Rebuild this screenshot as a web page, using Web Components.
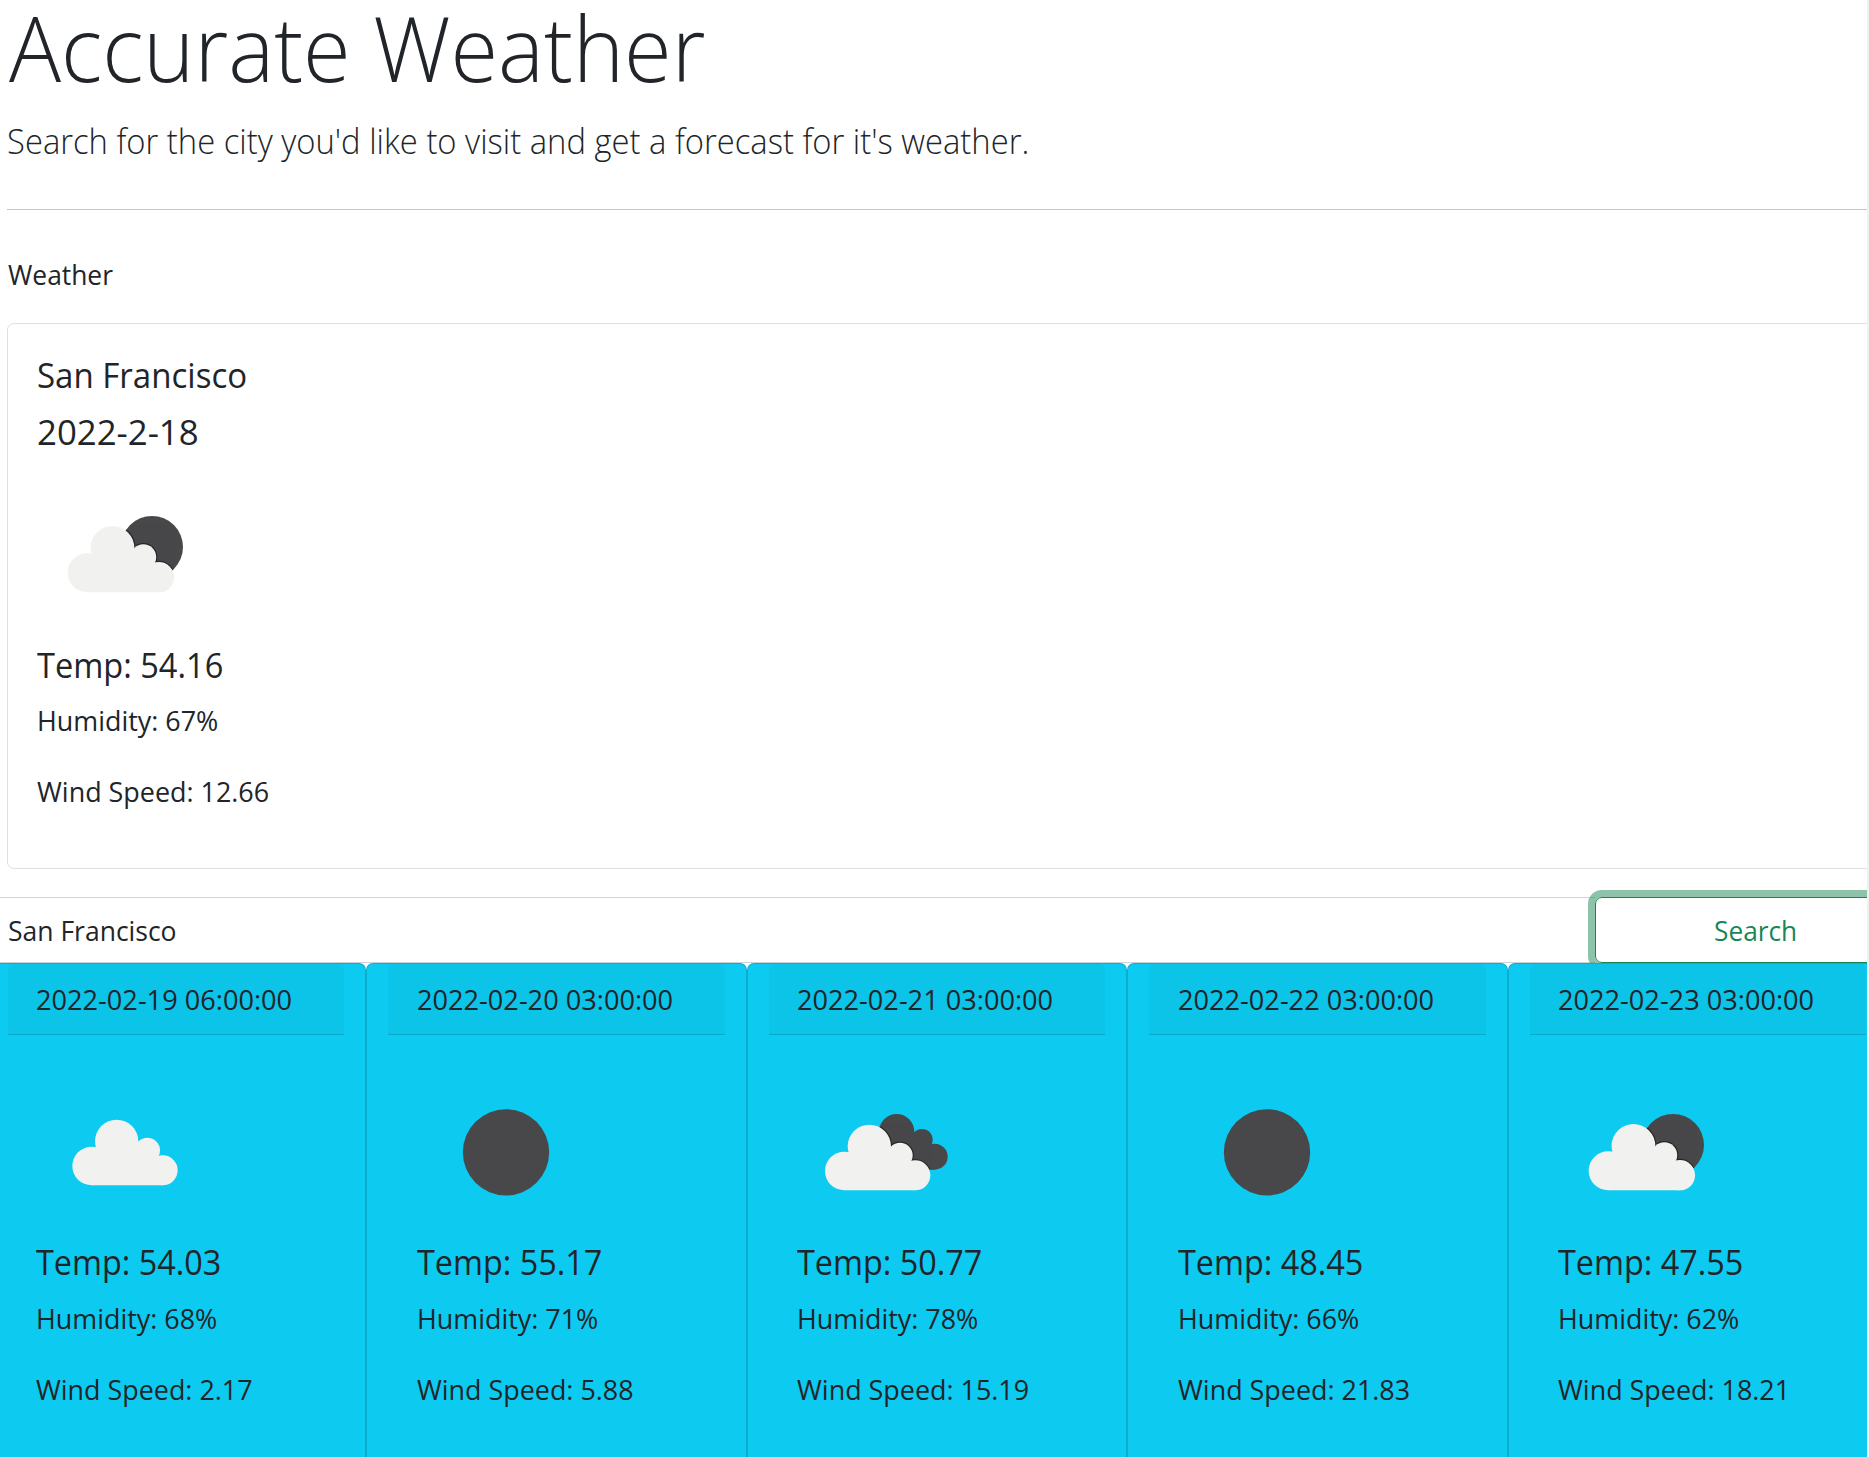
<!DOCTYPE html>
<html lang="en"><head><meta charset="utf-8"><title>Accurate Weather</title>
<style>
html,body{margin:0;height:1457px;overflow:hidden;background:#fff}
body{font-family:"Open Sans","Noto Sans",sans-serif;color:#212529}
</style></head><body>
<weather-app></weather-app>
<script>
// One line of text, condensed horizontally to the requested width.
class FitText extends HTMLElement{
  connectedCallback(){
    const r=this.attachShadow({mode:'open'}), a=n=>this.getAttribute(n);
    r.innerHTML=`<style>:host{display:block;white-space:nowrap;font-size:${a('size')||28}px;line-height:${a('line')||43}px;font-weight:${a('weight')||400}}
    span{display:inline-block;transform-origin:0 50%}</style><span><slot></slot></span>`;
    const s=r.querySelector('span'), w=+a('w');
    if(w) s.style.transform=`scaleX(${(w/s.offsetWidth).toFixed(4)})`;
  }
}
customElements.define('fit-text',FitText);

const cloud='<circle cx="164" cy="308" r="58"/><circle cx="239" cy="234" r="65"/><circle cx="331" cy="261" r="38"/><circle cx="377" cy="321" r="45"/><path d="M164 308L239 234L331 261L377 321V366H164Z"/>';
const sun='<circle cx="343" cy="246" r="93"/>';
const dark='<circle cx="297" cy="206" r="53"/><circle cx="373" cy="230" r="32"/><circle cx="411" cy="281" r="39"/><path d="M260 220L297 206L373 230L411 281V320H290Z"/>';
const layered=(back,t)=>`<defs><clipPath id="b">${back}</clipPath></defs><g fill="#48484a">${back}</g>
  <g clip-path="url(#b)"><g transform="${t}" fill="#232324" stroke="#232324" stroke-width="7" opacity=".85">${cloud}</g></g>
  <g transform="${t}" fill="#f1f1ef">${cloud}</g>`;
class WeatherIcon extends HTMLElement{
  connectedCallback(){
    const k=this.getAttribute('kind');
    const art={cloud:`<g fill="#f1f1ef" transform="translate(3 1)">${cloud}</g>`,clear:'<circle cx="267" cy="268" r="129.5" fill="#48484a"/>',
      few:layered(sun,'translate(91 382) scale(1.01) translate(-107 -366)'),broken:layered(dark,'translate(-24 16)')}[k];
    this.attachShadow({mode:'open'}).innerHTML=`<style>:host{display:block;width:178px;height:178px}svg{display:block}</style><svg width="178" height="178" viewBox="${k=='few'||k=='broken'?-2:0} 0 534 534">${art}</svg>`;
  }
}
customElements.define('weather-icon',WeatherIcon);

class CurrentCard extends HTMLElement{
  connectedCallback(){
    this.attachShadow({mode:'open'}).innerHTML=`<style>
    :host{display:block;box-sizing:border-box;height:546px;margin:0 0 0 7px;width:1900px;border:1px solid #dfdfdf;border-radius:7px;padding:29px 0 0 28.5px}
    .d{margin-top:14px}weather-icon{margin:12px 0 0 .5px}.t{margin-top:0}.h{margin-top:13px}.w{margin-top:28px}</style>
    <fit-text size="35" w="210.5">San Francisco</fit-text>
    <fit-text class="d" size="35" w="162">2022-2-18</fit-text>
    <weather-icon kind="few"></weather-icon>
    <fit-text class="t" size="35" w="186">Temp: 54.16</fit-text>
    <fit-text class="h" w="181.5">Humidity: 67%</fit-text>
    <fit-text class="w" w="232.5">Wind Speed: 12.66</fit-text>`;
  }
}
customElements.define('current-card',CurrentCard);

class ForecastCard extends HTMLElement{
  connectedCallback(){
    const a=n=>this.getAttribute(n);
    this.attachShadow({mode:'open'}).innerHTML=`<style>
    :host{display:block;box-sizing:border-box;flex:0 0 380.5px;height:520px;background:#0dcaf0;border:1px solid rgba(0,0,0,.14);border-radius:7px;padding:0 21px}
    header{box-sizing:border-box;height:71px;padding:14px 28px 0 28.5px;background:rgba(0,0,0,.03);border-bottom:1px solid rgba(0,0,0,.14);border-radius:6px 6px 0 0}
    main{padding:28px 0 0 28.5px}.t{margin-top:-1px}.h{margin-top:14px}.w{margin-top:28px}</style>
    <header><fit-text w="256">${a('date')}</fit-text></header>
    <main><weather-icon kind="${a('kind')}"></weather-icon>
    <fit-text class="t" size="35" w="185">Temp: ${a('temp')}</fit-text>
    <fit-text class="h" w="181.5">Humidity: ${a('hum')}%</fit-text>
    <fit-text class="w" w="${a('wind').length>4?232.5:217}">Wind Speed: ${a('wind')}</fit-text></main>`;
  }
}
customElements.define('forecast-card',ForecastCard);

class SearchBar extends HTMLElement{
  connectedCallback(){
    this.attachShadow({mode:'open'}).innerHTML=`<style>
    :host{display:flex;height:66px;margin-top:28px;width:1900px}
    .i{box-sizing:border-box;flex:0 0 1595px;border:solid #ced4da;border-width:1px 0;padding:11px 0 0 8px}
    .b{box-sizing:border-box;flex:1;border:1px solid #198754;border-radius:7px;box-shadow:0 0 0 7px rgba(25,135,84,.5);color:#198754;padding:11px 0 0 118px}</style>
    <div class="i"><fit-text w="168.5">San Francisco</fit-text></div>
    <div class="b"><fit-text w="83.5">Search</fit-text></div>`;
  }
}
customElements.define('search-bar',SearchBar);

class WeatherApp extends HTMLElement{
  connectedCallback(){
    this.attachShadow({mode:'open'}).innerHTML=`<style>
    :host{display:flex;height:1457px;overflow:hidden}
    .page{flex:1;min-width:0;height:1457px;overflow:hidden}
    .bar{flex:0 0 2px;background:#f1f1f1}
    .head{box-sizing:border-box;height:210px;margin-left:7px;border-bottom:1px solid #c4c5c6}
    .title{margin-left:2px}
    .label{box-sizing:border-box;height:113px;padding:43px 0 0 7.5px}
    .lead{margin-top:17px}
    .row{display:flex;margin-left:-14.2px;position:relative}</style>
    <div class="page">
    <div class="head"><fit-text class="title" size="91" line="95" weight="300" w="696">Accurate Weather</fit-text>
    <fit-text class="lead" size="35" line="58" weight="300" w="1022">Search for the city you'd like to visit and get a forecast for it's weather.</fit-text></div>
    <div class="label"><fit-text w="104.5">Weather</fit-text></div>
    <current-card></current-card>
    <search-bar></search-bar>
    <div class="row">
    <forecast-card date="2022-02-19 06:00:00" kind="cloud" temp="54.03" hum="68" wind="2.17"></forecast-card>
    <forecast-card date="2022-02-20 03:00:00" kind="clear" temp="55.17" hum="71" wind="5.88"></forecast-card>
    <forecast-card date="2022-02-21 03:00:00" kind="broken" temp="50.77" hum="78" wind="15.19"></forecast-card>
    <forecast-card date="2022-02-22 03:00:00" kind="clear" temp="48.45" hum="66" wind="21.83"></forecast-card>
    <forecast-card date="2022-02-23 03:00:00" kind="few" temp="47.55" hum="62" wind="18.21"></forecast-card>
    </div></div><div class="bar"></div>`;
  }
}
customElements.define('weather-app',WeatherApp);
</script></body></html>
